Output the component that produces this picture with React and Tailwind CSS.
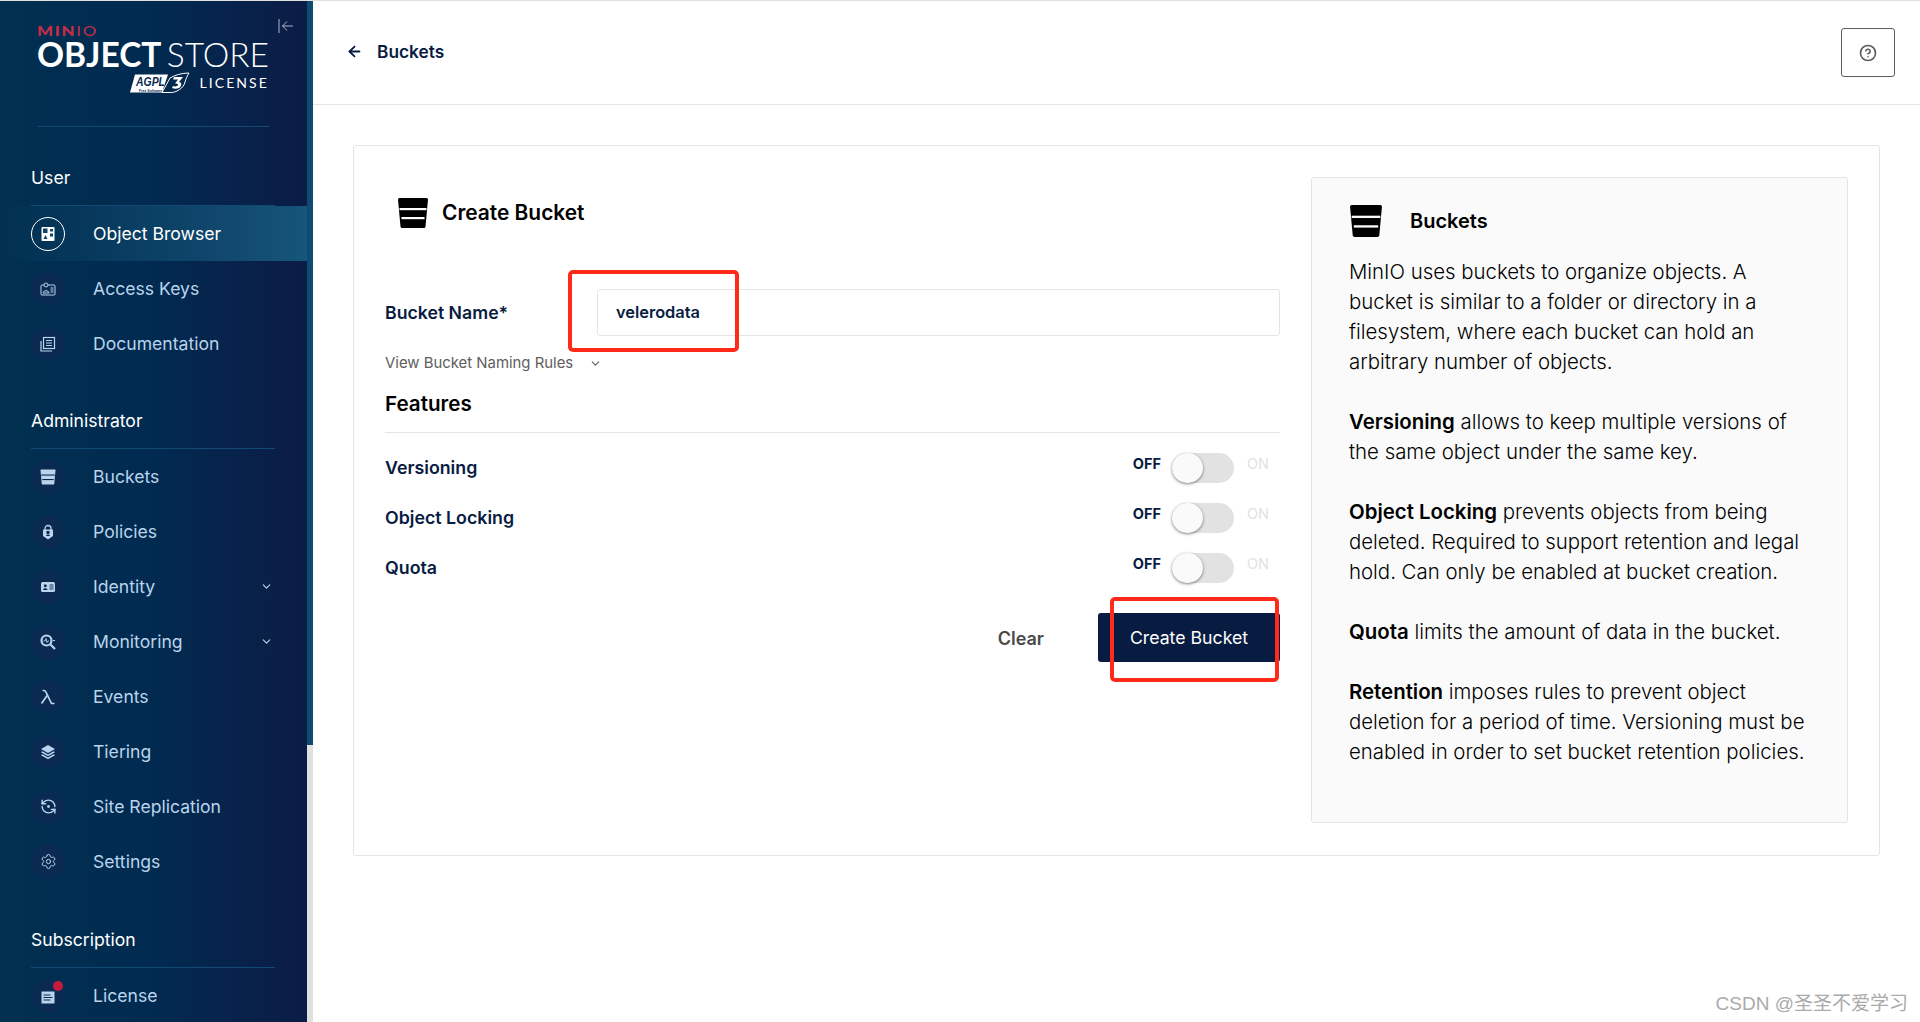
import React from "react";
import { ArrowLeft, ChevronDown, CircleHelp, RefreshCcwDot, Settings } from "lucide-react";

function BucketIcon({ className, stripe }) {
    return (
        <svg viewBox="0 0 32 32" className={className}>
            <path d="M1 2.500Q1 1 2.500 1h27Q31 1 31 2.500L28.500 29.500Q28.300 31 26.800 31H5.200Q3.700 31 3.500 29.500Z" fill="currentColor" />
            <rect x="2.500" y="11" width="27" height="2.200" fill={stripe} />
            <rect x="4.500" y="20" width="23" height="2.200" fill={stripe} />
        </svg>
    );
}

function ObjectIcon() {
    return (
        <svg viewBox="0 0 16 16" className="w-4 h-4">
            <rect x="1.500" y="1" width="13" height="14" rx="1" fill="#fff" />
            <rect x="3" y="2.500" width="4.500" height="4.500" fill="#0e4468" />
            <rect x="10" y="3" width="3" height="2.500" fill="#0e4468" />
            <rect x="10" y="7.500" width="3" height="3" fill="#0e4468" />
            <path d="M3.500 13 5.500 9 7.500 13Z" fill="#0e4468" />
        </svg>
    );
}

function KeysIcon() {
    return (
        <svg viewBox="0 0 16 16" className="w-4 h-4" fill="none" stroke="currentColor" strokeWidth="1">
            <rect x="1" y="4" width="14" height="10" rx="1" />
            <circle cx="6" cy="4" r="2" fill="#0a2a52" />
            <path d="M3 12c0-3 6-3 6 0Z" />
            <path d="M10.500 7h3M10.500 9h3M10.500 11h3" />
        </svg>
    );
}

function DocsIcon() {
    return (
        <svg viewBox="0 0 16 16" className="w-4 h-4" fill="none" stroke="currentColor" strokeWidth="1.200">
            <path d="M1 5v10h11" />
            <rect x="3.500" y="1.500" width="11" height="11" />
            <path d="M6 4.500h6M6 7h6M6 9.500h6" />
        </svg>
    );
}

function PolicyIcon() {
    return (
        <svg viewBox="0 0 16 16" className="w-4 h-4">
            <path d="M5 6V4.500a3 3 0 0 1 6 0V6" fill="none" stroke="currentColor" strokeWidth="1.300" />
            <path d="M3 5.500h10v6.500L8 15.500 3 12Z" fill="currentColor" />
            <circle cx="8" cy="8.500" r="1.700" fill="#0a2a52" />
            <path d="M6 12c.5-2 3.500-2 4 0Z" fill="#0a2a52" />
        </svg>
    );
}

function IdentityIcon() {
    return (
        <svg viewBox="0 0 16 16" className="w-4 h-4">
            <rect x="1" y="3" width="14" height="10" rx="1.500" fill="currentColor" />
            <circle cx="5.300" cy="6.800" r="1.500" fill="#0a2a52" />
            <path d="M3 11c.4-2.500 4.200-2.500 4.600 0Z" fill="#0a2a52" />
            <path d="M9.500 6h4M9.500 8h4M9.500 10h4" stroke="#0a2a52" strokeWidth="0.900" />
        </svg>
    );
}

function MonitoringIcon() {
    return (
        <svg viewBox="0 0 16 16" className="w-4 h-4" fill="none">
            <circle cx="6.500" cy="6.500" r="5" stroke="currentColor" strokeWidth="2.200" />
            <path d="M3.500 7h1.500l1-2.500 1 4 1-1.500h1" stroke="currentColor" strokeWidth="0.900" />
            <path d="M10.500 10.500 15 15" stroke="currentColor" strokeWidth="2.200" />
            <path d="M13 6.500h2" stroke="currentColor" strokeWidth="1" />
        </svg>
    );
}

function LambdaIcon() {
    return (
        <svg viewBox="0 0 16 16" className="w-4 h-4" fill="none" stroke="currentColor" strokeWidth="1.700">
            <path d="M2.500 1.500h1.500c1 0 1.500.5 2 1.600L11.500 14.500h3" />
            <path d="M7.500 6 1.500 14.500" />
        </svg>
    );
}

function LayersIcon() {
    return (
        <svg viewBox="0 0 16 16" className="w-4 h-4" fill="currentColor">
            <path d="M8 1 15 5 8 9 1 5Z" />
            <path d="M2.500 7.300 8 10.400l5.500-3.100L15 8.200 8 12.200 1 8.200Z" />
            <path d="M2.500 10.300 8 13.400l5.500-3.100 1.500.9-7 4-7-4Z" />
        </svg>
    );
}

function LicenseIcon() {
    return (
        <svg viewBox="0 0 16 16" className="w-4 h-4">
            <path d="M1.500 3.500h13v12h-13Z" fill="currentColor" />
            <path d="M3.500 7h7M3.500 9.500h9M3.500 12h7" stroke="#0a2a52" strokeWidth="1" />
        </svg>
    );
}

function AgplBadge() {
    return (
        <svg viewBox="0 0 60 22" className="w-[60px] h-[22px]">
            <path d="M5 2.500h33l-6 18H0Z" fill="#fff" />
            <text x="6" y="14" fontFamily="Liberation Sans" fontSize="13" fontStyle="italic" fontWeight="700" fill="#0a2a52" textLength="29" lengthAdjust="spacingAndGlyphs">AGPL</text>
            <text x="9" y="19.500" fontFamily="Liberation Sans" fontSize="3.500" fontWeight="700" fill="#0a2a52">Free Software</text>
            <path d="M32 20.500 40 6c5-3 12-5 19-5-2 3-3 6-4 9-1 6-9 11-15 10.500Z" fill="none" stroke="#fff" strokeWidth="1" />
            <path d="M44 5h9l-4 5c3 0 3 4 0 6-2 1-5 1-7 0l1-2c2 1 5 .5 5-1.500 0-1-2-1-3-1l3-4h-5Z" fill="#fff" />
        </svg>
    );
}

function Logo() {
    return (
        <div className="w-[232px] ml-[37px] pt-[24px] text-white font-['Lato',sans-serif] leading-none">
            <div className="flex h-[12px] items-center text-[#c72c48] text-[13px] font-black tracking-[0.1em] scale-x-[1.3] origin-left">
                MIN<span className="font-normal">IO</span>
            </div>
            <div className="flex justify-between h-[32px] items-center text-[33.500px] mt-[2px] whitespace-nowrap">
                <span className="font-bold">OBJECT</span>
                <span className="font-light">STORE</span>
            </div>
            <div className="flex justify-end items-center gap-[9px] mt-[1px] h-[22px]">
                <AgplBadge />
                <span className="text-[14px] tracking-[0.15em]">LICENSE</span>
            </div>
        </div>
    );
}

function NavItem({ icon, label, active, caret, dot }) {
    return (
        <div className={`flex items-center h-[55px] pl-[31px] ${active ? "bg-linear-to-r from-transparent to-[#15567a]" : ""}`}>
            <div className={`relative flex items-center justify-center w-[34px] h-[34px] rounded-full ${active ? "border border-white text-white" : "bg-[#0a2a52] text-[#b9d4ec]"}`}>
                {icon}
                {dot && <span className="absolute top-[2px] right-[2px] w-[10px] h-[10px] rounded-full bg-[#c51b3f]" />}
            </div>
            <span className={`ml-[28px] pt-[2px] text-[17.600px] flex-1 ${active ? "text-white" : "text-[#b9d4ec]"}`}>{label}</span>
            {caret && (
                <span className="flex items-center justify-center w-[18px] h-[18px] mr-[32px] rounded-sm bg-[#0a2147] text-[#b9d4ec]">
                    <ChevronDown size={13} />
                </span>
            )}
        </div>
    );
}

function SectionTitle({ children, top, bottom }) {
    return (
        <div className={`ml-[31px] mr-[32px] leading-6 text-[17.600px] text-white border-b border-[#124a74] ${top} ${bottom}`}>
            {children}
        </div>
    );
}

function Sidebar() {
    return (
        <div className="flex w-[313px] h-[1021px] shrink-0">
            <aside className="w-[307px] overflow-hidden bg-linear-to-r from-[#013050] via-[#012a50] to-[#0b1c46]">
                <div className="flex h-[125px]">
                    <Logo />
                    <svg viewBox="0 0 16 16" className="w-[16px] h-[16px] ml-[9px] mt-[17px]" fill="none" stroke="#aab6c6" strokeWidth="1">
                        <path d="M1 1v14M15 8H4.500M9 3.500 4.500 8 9 12.500" />
                    </svg>
                </div>
                <div className="h-px ml-[38px] mr-[38px] bg-[#124a74]" />
                <SectionTitle top="pt-[39px]" bottom="pb-[15px]">User</SectionTitle>
                <NavItem active icon={<ObjectIcon />} label="Object Browser" />
                <NavItem icon={<KeysIcon />} label="Access Keys" />
                <NavItem icon={<DocsIcon />} label="Documentation" />
                <SectionTitle top="pt-[38px]" bottom="pb-[15px]">Administrator</SectionTitle>
                <NavItem icon={<BucketIcon className="w-4 h-4" stripe="#0a2a52" />} label="Buckets" />
                <NavItem icon={<PolicyIcon />} label="Policies" />
                <NavItem icon={<IdentityIcon />} label="Identity" caret />
                <NavItem icon={<MonitoringIcon />} label="Monitoring" caret />
                <NavItem icon={<LambdaIcon />} label="Events" />
                <NavItem icon={<LayersIcon />} label="Tiering" />
                <NavItem icon={<RefreshCcwDot size={17} />} label="Site Replication" />
                <NavItem icon={<Settings size={17} strokeWidth={1.400} />} label="Settings" />
                <SectionTitle top="pt-[39px]" bottom="pb-[15px]">Subscription</SectionTitle>
                <NavItem dot icon={<LicenseIcon />} label="License" />
            </aside>
            <div className="flex flex-col w-[6px]">
                <div className="h-[744px] bg-[#0f4a73]" />
                <div className="flex-1 bg-[#e0e0e0]" />
            </div>
        </div>
    );
}

function FeatureRow({ label }) {
    return (
        <div className="flex items-center justify-between h-[50px] pr-[11px]">
            <span className="text-[17.800px] font-semibold text-[#081c42]">{label}</span>
            <div className="flex items-center">
                <span className="text-[14.500px] font-bold text-[#081c42] -mt-[8px]">OFF</span>
                <div className="ml-[11px] w-[62px] h-[30px] rounded-full bg-[#e2e2e2]">
                    <div className="w-[31px] h-[30px] rounded-full bg-[#fafafa] shadow-[0_1px_3px_rgba(0,0,0,0.5)]" />
                </div>
                <span className="ml-[13px] text-[14.500px] text-[#e2e2e2] -mt-[8px]">ON</span>
            </div>
        </div>
    );
}

function RedBox({ className }) {
    return <div className={`absolute border-[4px] border-[#ff2a1a] rounded-[5px] ${className}`} />;
}

function CreateForm() {
    return (
        <div className="w-[895px] pt-[50px]">
            <div className="flex items-center h-[34px] pl-[12px]">
                <BucketIcon className="w-[32px] h-[32px] text-black" stripe="#fff" />
                <span className="ml-[13px] text-[20.900px] font-semibold text-black">Create Bucket</span>
            </div>
            <div className="flex items-center mt-[59px]">
                <span className="w-[212px] pt-[2px] text-[17.700px] font-semibold text-[#081c42]">Bucket Name*</span>
                <div className="relative flex-1 h-[47px] flex items-center pl-[18px] border border-[#e5e5e5] rounded-[3px] text-[16.400px] font-semibold text-[#081c42]">
                    velerodata
                    <RedBox className="-left-[30px] -top-[20px] w-[171px] h-[82px]" />
                </div>
            </div>
            <div className="flex items-center h-[20px] mt-[17px] text-[14.900px] text-[#5e5e5e]">
                View Bucket Naming Rules
                <ChevronDown size={13} className="ml-[16px]" />
            </div>
            <div className="mt-[17px] leading-7 text-[20.600px] font-semibold text-black">Features</div>
            <div className="h-px mt-[14px] mb-[10px] bg-[#e5e5e5]" />
            <FeatureRow label="Versioning" />
            <FeatureRow label="Object Locking" />
            <FeatureRow label="Quota" />
            <div className="flex items-center justify-end mt-[20px]">
                <span className="pt-[1px] text-[18px] font-semibold text-[#4a4a4a] mr-[54px]">Clear</span>
                <div className="relative flex items-center justify-center w-[182px] h-[49px] pt-[1px] rounded-[3px] bg-[#081c42] text-white text-[17.700px]">
                    <span>Create Bucket</span>
                    <RedBox className="left-[12px] -top-[16px] w-[169px] h-[85px]" />
                </div>
            </div>
        </div>
    );
}

function HelpPanel() {
    return (
        <div className="w-[537px] h-[646px] mt-[31px] px-[37px] pt-[25px] bg-[#fafafa] border border-[#e5e5e5] rounded-[3px] text-[20.400px] leading-[30px] font-light text-black">
            <div className="flex items-center h-[36px] mb-[18px]">
                <BucketIcon className="w-[34px] h-[34px] text-black" stripe="#fafafa" />
                <span className="ml-[27px] text-[20px] font-semibold">Buckets</span>
            </div>
            <p>MinIO uses buckets to organize objects. A bucket is similar to a folder or directory in a filesystem, where each bucket can hold an arbitrary number of objects.</p>
            <p className="mt-[30px]"><b className="font-semibold">Versioning</b> allows to keep multiple versions of the same object under the same key.</p>
            <p className="mt-[30px]"><b className="font-semibold">Object Locking</b> prevents objects from being deleted. Required to support retention and legal hold. Can only be enabled at bucket creation.</p>
            <p className="mt-[30px]"><b className="font-semibold">Quota</b> limits the amount of data in the bucket.</p>
            <p className="mt-[30px]"><b className="font-semibold">Retention</b> imposes rules to prevent object deletion for a period of time. Versioning must be enabled in order to set bucket retention policies.</p>
        </div>
    );
}

export default function App() {
    return (
        <div className="relative h-[1022px] w-[1920px] overflow-hidden bg-white border-t border-[#e0e0e0] font-['Inter',sans-serif]">
            <div className="flex">
                <Sidebar />
                <main className="flex-1">
                    <header className="flex items-center justify-between h-[104px] pl-[33px] pr-[25px] border-b border-[#e5e5e5]">
                        <div className="flex items-center -mt-[2px] text-[#081c42] text-[17.300px] font-semibold">
                            <ArrowLeft size={17} strokeWidth={2.500} />
                            <span className="ml-[14px]">Buckets</span>
                        </div>
                        <button className="flex items-center justify-center w-[54px] h-[49px] border border-[#5e5e5e] rounded-[3px] text-[#5e5e5e]">
                            <CircleHelp size={18} strokeWidth={2.200} />
                        </button>
                    </header>
                    <div className="flex justify-between h-[711px] w-[1527px] mt-[40px] ml-[40px] px-[31px] border border-[#e5e5e5] rounded-[3px]">
                        <CreateForm />
                        <HelpPanel />
                    </div>
                </main>
            </div>
            <span className="absolute right-[12px] bottom-[4px] text-[19px] text-[#aaaaaa] font-['Liberation_Sans','Noto_Sans_CJK_SC',sans-serif]">CSDN @圣圣不爱学习</span>
        </div>
    );
}
